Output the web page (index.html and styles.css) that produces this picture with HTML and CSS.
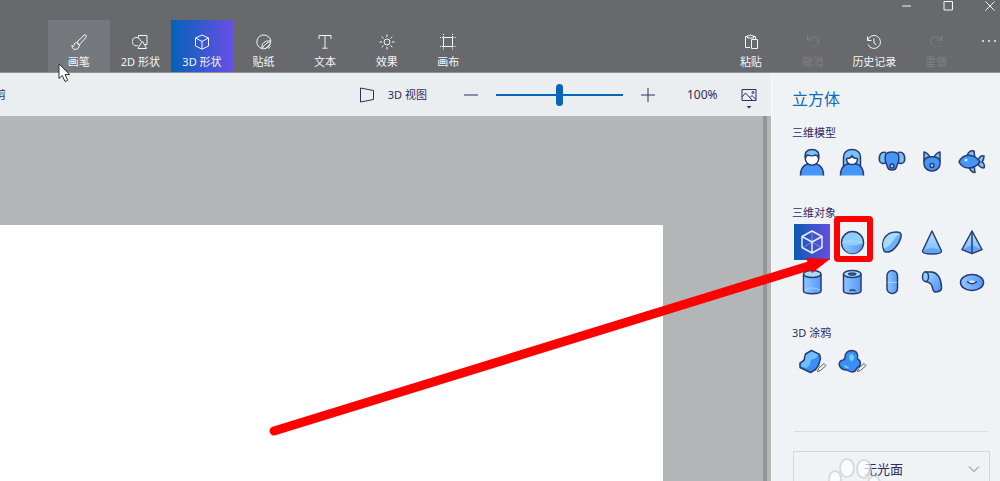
FILE: index.html
```html
<!DOCTYPE html>
<html lang="zh-CN">
<head>
<meta charset="utf-8">
<title>画图 3D</title>
<link rel="stylesheet" href="styles.css">
</head>
<body>
<svg class="defs" aria-hidden="true">
  <defs>
    <linearGradient id="blue" x1="0" y1="0" x2="1" y2="1"><stop offset="0" stop-color="#a2dcfd"/><stop offset="1" stop-color="#438efb"/></linearGradient>
    <linearGradient id="side" x1="0" y1="0" x2="1" y2="0"><stop offset="0" stop-color="#8fc8fd"/><stop offset="1" stop-color="#5598fa"/></linearGradient>
    <linearGradient id="down" x1="0" y1="0" x2="0" y2="1"><stop offset="0" stop-color="#b4e4fb"/><stop offset="1" stop-color="#7ab8fb"/></linearGradient>
  </defs>
</svg>
<div class="app">
  <header class="header">
    <div class="window-controls">
      <button aria-label="最小化"><svg width="12" height="12" viewBox="0 0 12 12"><path d="M2 6h9"/></svg></button>
      <button aria-label="最大化"><svg width="12" height="12" viewBox="0 0 12 12"><path d="M2 1.500h8.500v8.500H2z"/></svg></button>
      <button aria-label="关闭"><svg width="12" height="12" viewBox="0 0 12 12"><path d="M1.500 1.500l9 9M10.500 1.500l-9 9"/></svg></button>
    </div>
    <div class="ribbon">
      <nav class="tabs">
        <button class="tab tab-hover"><svg class="icon" viewBox="0 0 16 16"><path d="M5.500 8.500L13 1.300q1.200-.8 2 0t0 2L8.300 11M5.500 8.500q2.300.3 2.800 2.500M5.300 8.700c-2 .3-2.300 1.800-2.300 3-.4 1-1.500.5-2-.3-.2 2.600 1.200 4 3.300 4 2.500 0 4-1.700 4-4.400M5.600 8.700l2.500 2.500"/></svg><span>画笔</span></button>
        <button class="tab"><svg class="icon" viewBox="0 0 16 16"><path d="M6 11.500A4.200 4.200 0 1 1 8.500 7M6.500 3.500v-2h8.500v9h-2M10.300 7l4.300 7.500H6z"/></svg><span>2D 形状</span></button>
        <button class="tab tab-active"><svg class="icon" viewBox="0 0 16 16"><path d="M8 1l6.500 3v8L8 15.200 1.500 12V4zM1.500 4L8 7.500 14.500 4M8 7.500v7.500"/></svg><span>3D 形状</span></button>
        <button class="tab"><svg class="icon" viewBox="0 0 16 16"><path d="M6 14.700A7 7 0 1 1 14.800 7M6 14.700C5 9.500 9 6 14.800 7M6 14.700c4 .8 8.500-2.500 8.800-7.700M6.500 14C8 11 11 8.500 14.500 7.500M9.500 14.500l5-4.500M12 14.500l2.500-2"/></svg><span>贴纸</span></button>
        <button class="tab"><svg class="icon" viewBox="0 0 16 16"><path d="M2 5V1.500h12V5M8 1.500V14M5.500 14.200h5"/></svg><span>文本</span></button>
        <button class="tab"><svg class="icon" viewBox="0 0 16 16"><circle cx="8" cy="8" r="3"/><path d="M8 .5v2.500M8 13v2.500M.5 8H3M13 8h2.500M2.700 2.700l1.800 1.800M11.500 11.500l1.800 1.800M2.700 13.300l1.800-1.800M11.500 4.500l1.800-1.800"/></svg><span>效果</span></button>
        <button class="tab"><svg class="icon" viewBox="0 0 16 16"><path d="M3.500 3.500h9v9h-9z"/><path stroke-dasharray="1 1" d="M3.500 0v3.500M12.500 0v3.500M3.500 12.500V16M12.500 12.500V16M0 3.500h3.500M12.500 3.500H16M0 12.500h3.500M12.500 12.500H16"/></svg><span>画布</span></button>
      </nav>
      <div class="actions">
        <button class="tab"><svg class="icon" viewBox="0 0 16 16"><path d="M7 13.500H2.500V2.500h2M10.500 2.500h2V5.500M4.500 4V1.800h1.500q1.500-2 3 0h1.500V4zM8.500 5.500h6v9H8.500z"/></svg><span>粘贴</span></button>
        <button class="tab" disabled><svg class="icon" viewBox="0 0 16 16"><path d="M2.500 1.500v4.500h4.500M2.500 6C6 1.500 13.500 2 13.500 7c0 3-3 4.500-6 7.500"/></svg><span>撤消</span></button>
        <button class="tab"><svg class="icon" viewBox="0 0 16 16"><path d="M1.500 2.500v4h4M1.700 6.300A6.500 6.500 0 1 1 2 10.500M8 4.500V9l2.500 2"/></svg><span>历史记录</span></button>
        <button class="tab" disabled><svg class="icon" viewBox="0 0 16 16"><path d="M13.500 1.500v4.500H9M13.500 6C10 1.500 2.500 2 2.500 7c0 3 3 4.500 6 7.500"/></svg><span>重做</span></button>
      </div>
      <button class="more" aria-label="更多"><svg width="16" height="4" viewBox="0 0 16 4"><circle cx="2" cy="2" r="1"/><circle cx="8" cy="2" r="1"/><circle cx="14" cy="2" r="1"/></svg></button>
    </div>
  </header>

  <main class="main">
    <div class="toolbar">
      <button class="crop">剪</button>
      <button class="view3d"><svg class="icon" viewBox="0 0 16 16"><path d="M1.500 1v14L14.500 12.500V3.500z"/></svg><span>3D 视图</span></button>
      <button class="zoom-out" aria-label="缩小"><svg class="icon" viewBox="0 0 16 16"><path d="M1 8h14"/></svg></button>
      <input class="zoom-slider" type="range" min="0" max="100" value="50" aria-label="缩放">
      <button class="zoom-in" aria-label="放大"><svg class="icon" viewBox="0 0 16 16"><path d="M1 8h14M8 1v14"/></svg></button>
      <span class="zoom-value">100%</span>
      <button class="picture" aria-label="显示选项"><svg width="16" height="22" viewBox="0 0 16 22"><path d="M1 2.500h14v11H1zM1 10l3.500-4 7 7.500M9 10.500l2-2 4 4"/><circle cx="12" cy="5.500" r="1"/><path class="solid" d="M5.500 19h5L8 21.500z"/></svg></button>
    </div>
    <div class="workspace">
      <div class="canvas"></div>
      <div class="scrollbar"></div>
    </div>
  </main>

  <aside class="panel">
    <h1 class="title">立方体</h1>
    <section class="group">
      <h2 class="label">三维模型</h2>
      <div class="shapes">
        <button class="shape" aria-label="男人"><svg viewBox="0 0 30 30"><path fill="#4595fb" d="M3.500 28.500c0-8 4-12 11.500-12s11.500 4 11.500 12"/><circle class="skin" cx="15" cy="11.500" r="6.700"/><path fill="#77c4fb" d="M8.300 11C7.500 5 10 2.500 15 2.500s7.500 2.500 6.700 8.500c-1-2-2-3-3-3-2 1-6 1-8 0-1 .5-2 1-2.400 3z"/></svg></button>
        <button class="shape" aria-label="女人"><svg viewBox="0 0 30 30"><path fill="#77c4fb" d="M6.500 22V11c0-6 4-8.500 8.500-8.500s8.500 2.500 8.500 8.500v11z"/><path fill="#4595fb" d="M3.500 28.500c0-8 4-12 11.500-12s11.500 4 11.500 12"/><path class="skin" d="M9.500 11.500c3 0 5-1 5.500-3 .5 2 2.500 3 5.500 3 0 4-2.500 6-5.500 6s-5.500-2-5.500-6z"/></svg></button>
        <button class="shape" aria-label="狗"><svg viewBox="0 0 30 30"><path fill="#77c4fb" d="M9 5.500C4 4 1.500 8 2.500 14c1 3 5 3.500 6.500 1M21 5.500c5-1.500 7.500 2.500 6.500 8.500-1 3-5 3.500-6.500 1"/><path fill="#4595fb" d="M8.500 8C10 4 20 4 21.500 8c1.500 5-1 9-2 12-1 4-8 4-9 0-1-3-3.500-7-2-12z"/><circle fill="#9dd5fa" cx="15" cy="19" r="2"/></svg></button>
        <button class="shape" aria-label="猫"><svg viewBox="0 0 30 30"><path fill="#77c4fb" d="M7 15V5c2 0 5 3 6 5h4c1-2 4-5 6-5v10"/><path fill="#4595fb" d="M8 12c3-3 11-3 14 0 3 6-1 12-7 12S5 18 8 12z"/><circle fill="#9dd5fa" cx="15" cy="18.500" r="2"/></svg></button>
        <button class="shape" aria-label="鱼"><svg viewBox="0 0 30 30"><path fill="#77c4fb" d="M10 9c1-4 4-6 7-5l1 8zM12 20c1 3 3 5.500 6 5.500l-1-7z"/><path fill="#77c4fb" d="M21 13c2-4 4-5 6-4 0 3-1 5-2 6 2 1 3 4 2 6-3 0-5-2-6-4z"/><path fill="#4595fb" d="M2 15C6 6 17 6 23 15 17 23 6 23 2 15z"/><circle fill="#c8eaff" stroke="none" cx="9" cy="13" r="1.500"/></svg></button>
      </div>
    </section>
    <section class="group">
      <h2 class="label">三维对象</h2>
      <div class="shapes">
        <button class="shape selected" aria-label="立方体"><svg viewBox="0 0 30 30"><path class="thin" d="M15 15L5 21M15 15L25 21M15 4v11"/><path d="M15 4l10 5.500v11L15 26 5 20.500v-11zM5 9.500L15 15l10-5.500M15 15v11"/></svg></button>
        <button class="shape" aria-label="球体"><svg viewBox="0 0 30 30"><circle fill="#8ccff9" cx="15.500" cy="15.500" r="11"/><path fill="url(#side)" stroke="none" d="M5.500 16.500q10 4 20 0a10 10 0 0 1-20 0z"/><path class="shine" d="M5.500 16q10-4 20 0"/></svg></button>
        <button class="shape" aria-label="半球"><svg viewBox="0 0 30 30"><path fill="#6fb0fa" d="M7 24C3 14 9 5 19 5c4 0 6 1 5 5C22 18 15 26 9 25q-1 0-2-1z"/><path fill="#a5dcfc" stroke="none" d="M7 21.500C4 14 10 6 19 6q3 0 4 1.500C16 9 17 18 7 21.500z"/></svg></button>
        <button class="shape" aria-label="圆锥"><svg viewBox="0 0 30 30"><path fill="url(#down)" d="M15 4l9.500 20c0 4-19 4-19 0z"/><path fill="#5fa4fa" stroke="none" d="M6.500 23q8.500-3.500 17 0c1 4-18 4-17 0z"/></svg></button>
        <button class="shape" aria-label="棱锥"><svg viewBox="0 0 30 30"><path fill="url(#down)" d="M15 4l10 18.500-10 4-10-4z"/><path fill="#5fa4fa" stroke="none" d="M14.500 18l-8 4 8 3.500zM15.500 18l8 4-8 3.500z"/><path d="M15 4v22.500"/></svg></button>
        <button class="shape" aria-label="圆柱"><svg viewBox="0 0 30 30"><path fill="url(#side)" d="M6.500 7v17c0 3.500 17.500 3.500 17.500 0V7"/><ellipse fill="#a4dcfa" cx="15.250" cy="7" rx="8.750" ry="3.500"/><path class="shine" d="M7.500 23q8-4 15.500 0"/></svg></button>
        <button class="shape" aria-label="管"><svg viewBox="0 0 30 30"><path fill="url(#side)" d="M6.500 7v17c0 3.500 17.500 3.500 17.500 0V7"/><ellipse fill="#a4dcfa" cx="15.250" cy="7" rx="8.750" ry="3.500"/><ellipse fill="#58a2f5" cx="15.250" cy="7" rx="3.500" ry="1"/><path d="M12.500 23.500q3-1 6 0"/></svg></button>
        <button class="shape" aria-label="胶囊"><svg viewBox="0 0 30 30"><rect fill="url(#side)" x="10" y="3.500" width="10.500" height="23" rx="5.250"/><path class="shine" d="M10.500 15.500h9.500"/></svg></button>
        <button class="shape" aria-label="弯管"><svg viewBox="0 0 30 30"><path fill="url(#blue)" d="M8 5h7c6 1 9 7 9.500 15 .5 4-3 5-7 5-2-1-1.500-4-3-7-1-2-3-3-6-3.500z"/><ellipse fill="#91cffd" cx="8.500" cy="9.700" rx="3" ry="4.800"/></svg></button>
        <button class="shape" aria-label="圆环"><svg viewBox="0 0 30 30"><ellipse fill="url(#side)" cx="15" cy="15.500" rx="11.500" ry="8"/><path fill="#eff3f5" stroke="none" d="M11 15.500q4-4 8 0-4 3-8 0z"/><path d="M10 14.500q5 4.500 10 0"/></svg></button>
      </div>
    </section>
    <section class="group">
      <h2 class="label">3D 涂鸦</h2>
      <div class="shapes">
        <button class="shape" aria-label="锐边"><svg viewBox="0 0 30 30"><path fill="#398ff5" d="M8.500 7l6-3.500 8 4 1 4-2 7-3 4-5 3-10.500-5V16l4-3z"/><path fill="#6fc0fa" stroke="none" d="M9 8l5.500-3.500 6.500 3-2 3.500-5 2-1.500 5.500-3 2.500L4 19.500V17l4-3z"/><path class="pencil" d="M20.500 24.500l1-3 5.500-5 2 2-5.500 5z"/></svg></button>
        <button class="shape" aria-label="柔边"><svg viewBox="0 0 30 30"><path fill="#398ff5" d="M8 10c0-4 3-6.500 6.500-6.500 5 0 7 3.500 6 8.500 4 2 3.500 7 .5 8-2 1-1 5-6 5-3 0-3-2-6-2-8-1-9-9-3-10q2-.5 2-3z"/><path fill="#78c5fc" stroke="none" d="M14 7c4 0 4 6 1 7s-4-6-1-7zM7 18l5 2-1 1.500-4-1.500z"/><path class="pencil" d="M20.500 24.500l1-3 5.500-5 2 2-5.500 5z"/></svg></button>
      </div>
    </section>
    <hr class="divider">
    <div class="finish">
      <select aria-label="材质"><option>无光面</option></select>
      <svg class="chevron" width="12" height="8" viewBox="0 0 12 8"><path d="M1 1.500l5 5 5-5"/></svg>
      <svg class="paw" width="54" height="30" viewBox="0 0 54 30"><ellipse cx="8" cy="21" rx="6" ry="8"/><ellipse cx="20" cy="10" rx="7" ry="9"/><ellipse cx="37" cy="11" rx="7" ry="9"/><ellipse cx="47" cy="26" rx="6" ry="8"/></svg>
    </div>
  </aside>

  <div class="highlight"></div>
  <svg class="arrow" width="566" height="186" viewBox="0 0 566 186"><path class="shaft" d="M8 179L546 13"/><path class="head" d="M540 6l24 1-18 14z"/></svg>
  <svg class="cursor" width="14" height="20" viewBox="0 0 14 20"><path d="M1 1v14.500l3.300-3 2.700 6 2.700-1.200-2.600-5.800h4.600z"/></svg>
</div>
</body>
</html>
```
FILE: styles.css
```css
* { box-sizing: border-box; }

body {
  margin: 0;
  font-family: "Noto Sans", "Noto Sans CJK SC", sans-serif;
  font-size: 11px;
  line-height: 16px;
  color: #302c60;
}

button {
  margin: 0;
  padding: 0;
  border: 0;
  background: none;
  color: inherit;
  font: inherit;
  white-space: nowrap;
}

svg {
  display: block;
  fill: none;
  stroke: currentColor;
}

.defs { position: absolute; width: 0; height: 0; }

.icon { width: 16px; height: 16px; }

.app {
  position: relative;
  display: grid;
  grid-template: auto 1fr / 1fr 229px;
  height: 100vh;
  overflow: hidden;
  background: #eff3f5;
}

/* Header */
.header {
  grid-column: 1 / -1;
  background: #67696d;
  color: #f5f5f6;
  border-bottom: 1px solid #909295;
}

.window-controls {
  display: flex;
  justify-content: flex-end;
  gap: 30px;
  height: 20px;
  padding-right: 4px;
}

.window-controls button { height: 12px; }

.ribbon {
  display: flex;
  height: 52px;
  padding-left: 48px;
}

.tabs { display: flex; width: 431px; }

.actions { display: flex; width: 247px; margin-left: auto; }

.tab {
  flex: 1;
  display: flex;
  flex-direction: column;
  align-items: center;
  gap: 4px;
  padding-top: 14px;
}

.tab:disabled { color: #7e8084; }
.tab-hover { background: #75787c; }
.tab-active { background: linear-gradient(90deg, #0562b8, #6750e5); }

.more {
  width: 33px;
  padding: 0 3px 10px 14px;
}

.more svg { fill: currentColor; stroke: none; }

/* Toolbar and drawing area */
.main {
  display: flex;
  flex-direction: column;
  min-width: 0;
}

.toolbar {
  display: flex;
  align-items: center;
  height: 43px;
  padding-right: 14px;
  background: #ebeef1;
  overflow: hidden;
}

.crop { margin-left: -5px; }

.view3d {
  display: flex;
  align-items: center;
  gap: 13px;
  margin-left: auto;
}

.zoom-out { margin-left: 36px; }

.zoom-slider {
  appearance: none;
  width: 127px;
  height: 22px;
  margin: 0 17px;
  background: linear-gradient(#0866b9, #0866b9) center / 100% 2px no-repeat;
}

.zoom-slider::-webkit-slider-thumb {
  appearance: none;
  width: 7px;
  height: 22px;
  border-radius: 4px;
  background: #0866b9;
}

.zoom-value {
  width: 32px;
  margin: 0 22px 0 31px;
  font-size: 12px;
}

.picture { padding-top: 6px; }

.solid { fill: currentColor; stroke: none; }

.workspace {
  flex: 1;
  display: flex;
  padding-right: 4px;
  background: #b3b6b6;
}

.canvas {
  flex: 1;
  margin: 109px 100px 0 0;
  background: #fff;
}

.scrollbar { width: 4px; background: #949797; }

/* Shape panel */
.panel {
  padding: 14px 10px 0 20px;
  border-left: 1px solid #f7f8f8;
  overflow: hidden;
}

.title {
  margin: 0 0 14px;
  font-size: 16px;
  line-height: 24px;
  font-weight: 400;
  color: #0d6bb8;
}

.group { margin-bottom: 25px; }

.label {
  margin: 0 0 3px;
  font-size: 11px;
  line-height: 16px;
  font-weight: 400;
}

.shapes {
  display: grid;
  grid-template-columns: repeat(5, 36px);
  gap: 4px;
  margin-left: 2px;
}

.shape {
  display: grid;
  place-items: center;
  height: 36px;
  color: #2a3b70;
}

.shape svg {
  width: 30px;
  height: 30px;
  stroke-width: 1.5;
  stroke-linejoin: round;
}

.shape.selected {
  background: linear-gradient(90deg, #0b5ab4, #6450e0);
  color: #e8edfa;
}

.shape .skin { fill: #fff; }
.shape .thin { stroke-width: 1; opacity: 0.4; }
.shape .shine { stroke: #b9e1ff; stroke-width: 1; opacity: 0.7; }
.shape .pencil { fill: #eff3f5; stroke: #5c5870; stroke-width: 1; }

.divider {
  margin: 51px 2px 19px;
  border: 0;
  border-top: 1px solid #d9dde1;
}

.finish { position: relative; margin-left: 1px; }

.finish select {
  appearance: none;
  display: block;
  width: 100%;
  height: 36px;
  padding: 0 16px 0 0;
  border: 1px solid #d3d7db;
  border-radius: 0;
  background: transparent;
  color: #302c60;
  font: inherit;
  font-size: 13px;
  text-align-last: center;
}

.chevron {
  position: absolute;
  top: 14px;
  right: 10px;
  color: #74777c;
}

.paw {
  position: absolute;
  top: 7px;
  left: 34px;
  fill: #fff;
  stroke: #d2d2d2;
  stroke-width: 2;
  opacity: 0.7;
}

/* Annotation */
.highlight {
  position: absolute;
  top: 216px;
  right: 127px;
  width: 39px;
  height: 46px;
  border: 6px solid #fe0000;
  border-radius: 4px;
}

.arrow {
  position: absolute;
  top: 252px;
  right: 168px;
}

.arrow .shaft { stroke: #fe0000; stroke-width: 9; stroke-linecap: round; }
.arrow .head { fill: #fe0000; stroke: none; }

.cursor {
  position: absolute;
  top: 63px;
  left: 58px;
  fill: #fff;
  stroke: #333;
}
```
